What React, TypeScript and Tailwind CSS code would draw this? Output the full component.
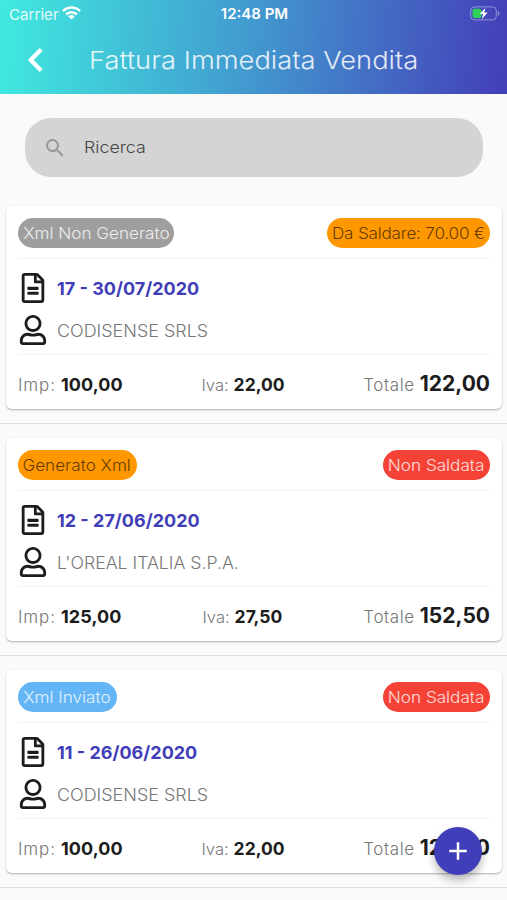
import React from 'react';
import { FaRegFileAlt, FaRegUser } from 'react-icons/fa';
import { MdAdd, MdSearch } from 'react-icons/md';

interface Invoice {
  number: string;
  customer: string;
  customerClass: string;
  xml: string;
  xmlClass: string;
  payment: string;
  paymentClass: string;
  imp: string;
  iva: string;
  total: string;
}

const invoices: Invoice[] = [
  {
    number: '17 - 30/07/2020',
    customer: 'CODISENSE SRLS',
    customerClass: 'scale-x-[1.055]',
    xml: 'Xml Non Generato',
    xmlClass: 'w-[156px] bg-[#9e9e9e] text-white/80',
    payment: 'Da Saldare: 70.00 €',
    paymentClass: 'w-[163px] bg-[#ff9800] text-black/65 tracking-[-0.2px]',
    imp: '100,00',
    iva: '22,00',
    total: '122,00',
  },
  {
    number: '12 - 27/06/2020',
    customer: "L'OREAL ITALIA S.P.A.",
    customerClass: 'scale-x-[1.04]',
    xml: 'Generato Xml',
    xmlClass: 'w-[119px] pr-px bg-[#ff9800] text-black/65',
    payment: 'Non Saldata',
    paymentClass: 'w-[107px] bg-[#f44336] text-white/80',
    imp: '125,00',
    iva: '27,50',
    total: '152,50',
  },
  {
    number: '11 - 26/06/2020',
    customer: 'CODISENSE SRLS',
    customerClass: 'scale-x-[1.055]',
    xml: 'Xml Inviato',
    xmlClass: 'w-[99px] pr-px bg-[#64b5f6] text-white/80',
    payment: 'Non Saldata',
    paymentClass: 'w-[107px] bg-[#f44336] text-white/80',
    imp: '100,00',
    iva: '22,00',
    total: '122,00',
  },
];

function StatusBar() {
  return (
    <div className="h-7 pl-[9px] pr-[7px] grid grid-cols-3 items-center text-[15px] leading-none">
      <div className="flex items-center text-white/85">
        <span className="w-[53px] origin-left scale-x-[1.01]">Carrier</span>
        <svg className="-mt-[2px]" width="19" height="14" viewBox="0 0 19 14" fill="none" stroke="white" strokeWidth="2.5">
          <path d="M1 5.1a12 12 0 0 1 17 0" />
          <path d="M4.2 8.5a7.5 7.5 0 0 1 10.6 0" />
          <path d="M9.5 13.6 6.4 10.4a4.4 4.4 0 0 1 6.2 0Z" fill="white" stroke="none" />
        </svg>
      </div>
      <span className="-mt-px text-center font-semibold text-white whitespace-nowrap">12:48 PM</span>
      <svg className="-mt-[2px] justify-self-end" width="30" height="15" viewBox="0 0 30 15" fill="none">
        <rect x="0.7" y="0.9" width="25.6" height="13" rx="3.6" stroke="white" strokeOpacity="0.4" />
        <path d="M27.8 5v5c1.2-.4 1.7-1.4 1.7-2.5S29 5.4 27.8 5Z" fill="white" fillOpacity="0.4" />
        <rect x="2.5" y="2.7" width="9" height="9.4" rx="2" fill="#30d158" />
        <path d="M15.5 1.7 9.8 8.1h3.3l-1.4 5.2 5.9-6.7h-3.4Z" fill="white" />
      </svg>
    </div>
  );
}

function Badge({ text, className }: { text: string; className: string }) {
  return (
    <span className={`h-[30px] flex justify-center rounded-full ${className}`}>
      <span className="scale-x-[1.07]">{text}</span>
    </span>
  );
}

function InvoiceCard({ invoice }: { invoice: Invoice }) {
  return (
    <li className="h-[232px] pt-[14px] pl-[6px] pr-[5px] border-b border-[#dcdcdc]">
      <div className="h-[203px] px-3 pt-3 bg-white rounded-[6px] shadow-[0_1px_2px_rgba(0,0,0,0.3)]">
        <div className="h-[41px] flex items-start justify-between border-b border-[#f3f3f3] font-light text-[16px] leading-[30px] whitespace-nowrap">
          <Badge text={invoice.xml} className={invoice.xmlClass} />
          <Badge text={invoice.payment} className={invoice.paymentClass} />
        </div>
        <div className="h-[96px] pt-[14px] border-b border-[#f3f3f3]">
          <div className="h-[30px] flex items-center">
            <FaRegFileAlt className="w-[30px] h-[30px] -mt-px mr-[9px] text-[#1c1c1c]" />
            <span className="pt-px text-[18px] font-bold text-[#3f3db8]">{invoice.number}</span>
          </div>
          <div className="mt-[12px] h-[30px] flex items-center">
            <FaRegUser className="w-[30px] h-[30px] mr-[9px] text-[#1c1c1c]" />
            <span className={`pt-[3px] origin-left text-[17px] font-light text-[#777] ${invoice.customerClass}`}>
              {invoice.customer}
            </span>
          </div>
        </div>
        <div className="pt-[2px] flex items-baseline justify-between text-[17px] leading-[54px] whitespace-nowrap text-[#1c1c1c]">
          <div>
            <span className="font-light text-[#777] tracking-[0.9px]">Imp:</span>
            <b className="ml-[5px] text-[18px] tracking-[0.1px]">{invoice.imp}</b>
          </div>
          <div>
            <span className="font-light text-[#777] text-[16.5px]">Iva:</span>
            <b className="ml-[5px] text-[17.5px]">{invoice.iva}</b>
          </div>
          <div>
            <span className="font-light text-[#777] tracking-[0.6px]">Totale</span>
            <b className="ml-[5px] text-[21px]">{invoice.total}</b>
          </div>
        </div>
      </div>
    </li>
  );
}

export default function App() {
  return (
    <div className="relative w-[507px] h-[900px] overflow-hidden bg-[#fafafa] font-['Inter','Liberation_Sans',sans-serif]">
      <header className="h-[94px] bg-[linear-gradient(94deg,#40e8df_1%,#4298cf_50%,#4440b9_99%)]">
        <StatusBar />
        <div className="h-[64px] pl-[27px] flex items-center">
          <button aria-label="Indietro">
            <svg className="-mt-px" width="17" height="26" viewBox="0 0 17 26" fill="none" stroke="white" strokeWidth="4.2">
              <path d="M14.2 2.4 3.6 13l10.6 10.6" strokeLinejoin="round" />
            </svg>
          </button>
          <h1 className="ml-[45px] origin-left scale-x-[1.115] text-[24.5px] font-light text-white/85 whitespace-nowrap">
            Fattura Immediata Vendita
          </h1>
        </div>
      </header>

      <div className="h-[98px] pt-[24px] pl-[25px] pr-[24px]">
        <div className="h-[59px] pl-[18px] flex items-center rounded-[26px] bg-[#d4d4d4]">
          <MdSearch className="w-6 h-6 text-[#969696]" />
          <span className="ml-[17px] origin-left scale-x-[1.08] text-[16.5px] font-[350] text-[#444]">Ricerca</span>
        </div>
      </div>

      <ul>
        {invoices.map((invoice) => (
          <InvoiceCard key={invoice.number} invoice={invoice} />
        ))}
      </ul>

      <button
        aria-label="Aggiungi"
        className="absolute left-[434px] top-[827px] w-[48px] h-[48px] flex items-center justify-center rounded-full bg-[#403eb8] shadow-[0_5px_9px_rgba(0,0,0,0.28)]"
      >
        <MdAdd className="w-[30px] h-[30px] text-white" />
      </button>
    </div>
  );
}
